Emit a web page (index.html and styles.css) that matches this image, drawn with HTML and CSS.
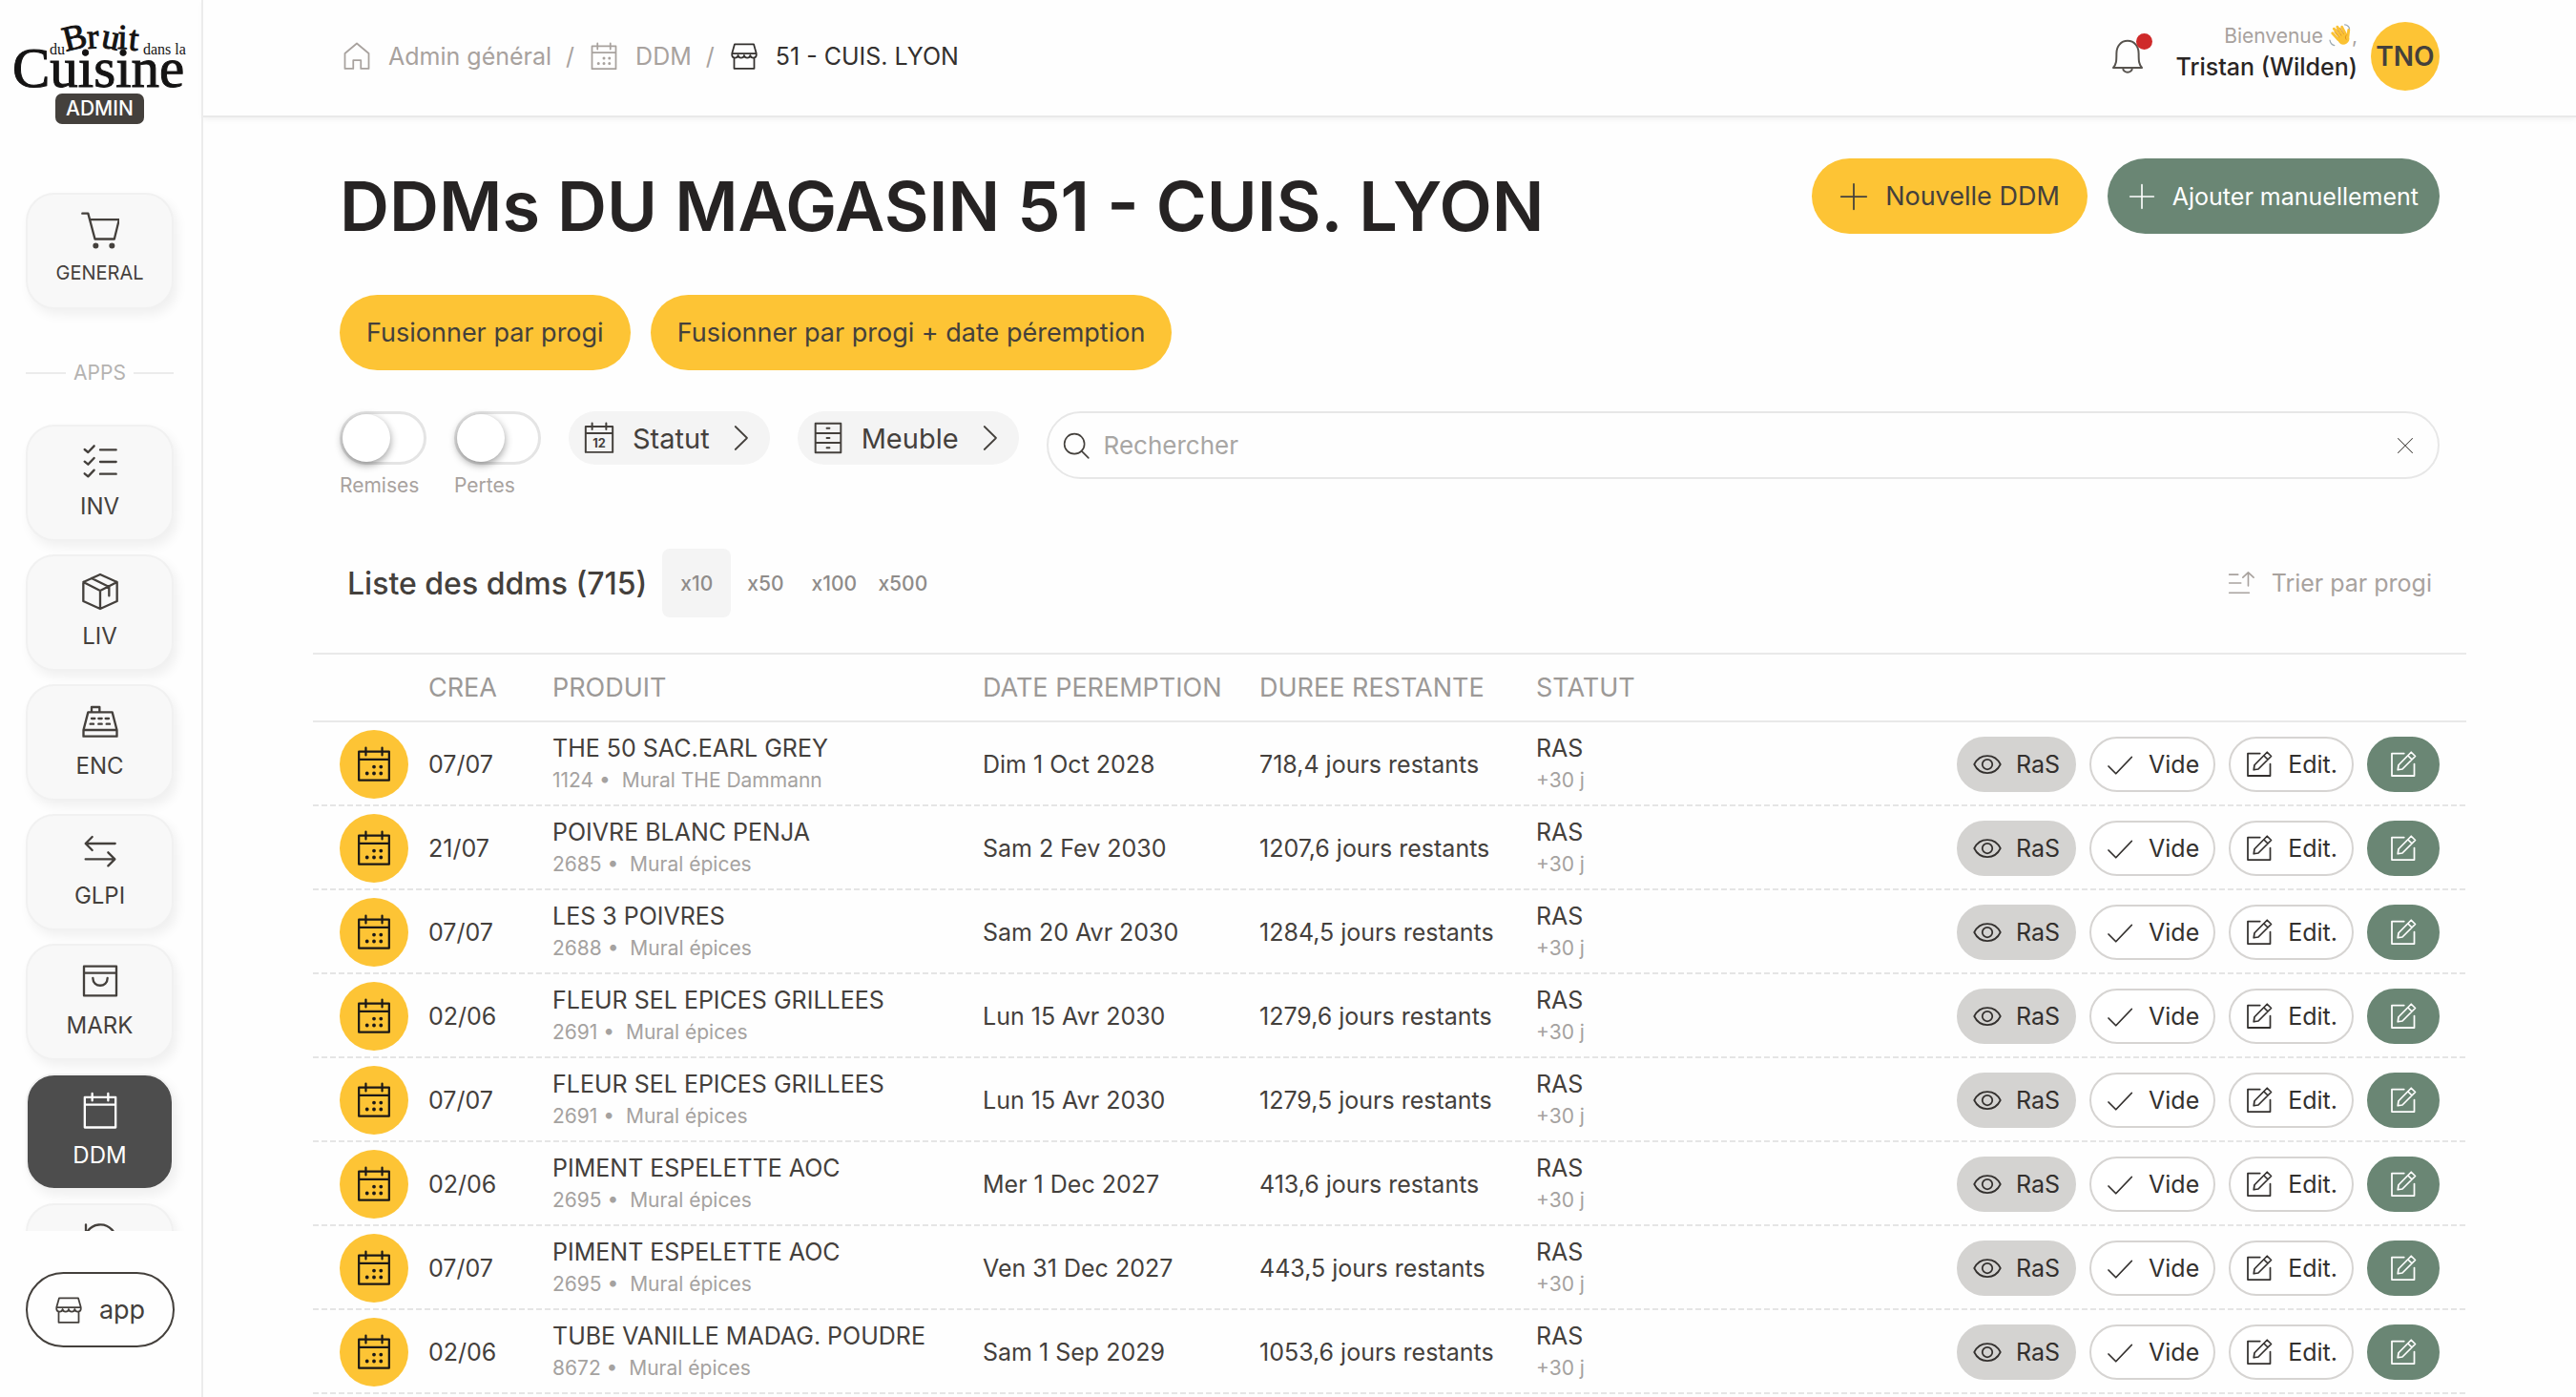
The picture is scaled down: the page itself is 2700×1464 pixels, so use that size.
FILE: index.html
```html
<!DOCTYPE html>
<html lang="fr">
  <head>
    <meta charset="UTF-8" />
    <meta name="viewport" content="width=device-width, initial-scale=1.0" />
    <title>DDMs du magasin 51 - CUIS. LYON</title>
    <link rel="stylesheet" href="styles.css">
  </head>
  <body>
    <!-- Icons -->
    <svg class="sprite" aria-hidden="true">
      <symbol id="i-home" viewBox="0 0 24 24"><path d="M2 9.6 12 1.2l10 8.4v12.7h-6.6v-7H9v7H2z" /></symbol>
      <symbol id="i-calendar" viewBox="0 0 24 24">
        <path d="M2 3.5h20v19H2zM2 8.8h20M6.6 1v5M17.4 1v5" />
        <path class="dots" d="M12 13.6h.01M16.6 13.6h.01M7.4 18h.01M12 18h.01M16.6 18h.01" />
      </symbol>
      <symbol id="i-calendar-blank" viewBox="0 0 24 24"><path d="M2.3 3.5h19.4v19H2.3zM2.3 8.2h19.4M7 1.2v4.4M17 1.2v4.4" /></symbol>
      <symbol id="i-store" viewBox="0 0 24 24"><path d="M4 1.8h16l2.2 7.8H1.8zM1.8 9.6v1.6a2.6 2.6 0 0 0 5.1 0 2.6 2.6 0 0 0 5.1 0 2.6 2.6 0 0 0 5.1 0 2.6 2.6 0 0 0 5.1 0V9.6M3.6 13.8v8.4h16.8v-8.4" /></symbol>
      <symbol id="i-cart" viewBox="0 0 24 24"><path d="M.8 1.6h3.6l4.3 16.1h12.2l3-12.2H5.5" /><path class="wheel" d="M9.2 21.9h.01M19.4 21.9h.01" /></symbol>
      <symbol id="i-checklist" viewBox="0 0 24 24"><path d="M12 4.4h10M12 12h10M12 19.6h10M2.2 4.2 4.4 6l3.8-4M2.2 11.8l2.2 1.8 3.8-4M2.2 19.4l2.2 1.8 3.8-4" /></symbol>
      <symbol id="i-box" viewBox="0 0 24 24"><path d="M12 1.2 22.6 6v12L12 22.8 1.4 18V6zM1.4 6 12 11.4 22.6 6M12 11.4v11.4M6.6 3.6 17.6 9v5.6" /></symbol>
      <symbol id="i-register" viewBox="0 0 24 24"><path d="M4.4 6.2h15.2l2.9 11.2v4H1.5v-4zM1.5 17.4h21M6.6 6.2V3h5v3.2M6.6 10.2h2M11 10.2h2M15.4 10.2h2M5.8 13.6h2M11 13.6h2M16 13.6h2" /></symbol>
      <symbol id="i-swap" viewBox="0 0 24 24"><path d="M21.4 7.2H3M7 3 2.8 7.2 7 11.4M2.8 17H21M17 12.8l4.2 4.2-4.2 4.2" /></symbol>
      <symbol id="i-bag" viewBox="0 0 24 24"><path d="M1.8 2.8h20.4v18.4H1.8zM1.8 7h20.4M7.4 10.2c0 6.2 9.2 6.2 9.2 0" /></symbol>
      <symbol id="i-history" viewBox="0 0 24 24"><path d="M3 2v5h5M3.6 7a9.8 9.8 0 1 1-1.2 6M12 8v5l3 2" /></symbol>
      <symbol id="i-bell" viewBox="0 0 24 26"><path d="M1.4 21.4c2.2-2.4 2.4-4.6 2.4-10.6C3.8 5.6 7 1.6 12 1.6s8.2 4 8.2 9.2c0 6 .2 8.2 2.4 10.6zM8.6 21.6c0 4.2 6.8 4.2 6.8 0" /></symbol>
      <symbol id="i-plus" viewBox="0 0 24 24"><path d="M12 1.4v21.2M1.4 12h21.2" /></symbol>
      <symbol id="i-drawers" viewBox="0 0 24 24"><path d="M2.6 1.2h18.8v21.6H2.6zM2.6 8.4h18.8M2.6 15.6h18.8M11 4.8h2M11 12h2M11 19.2h2" /></symbol>
      <symbol id="i-chevron" viewBox="0 0 24 24"><path d="m7 2.4 9.8 9.6L7 21.6" /></symbol>
      <symbol id="i-search" viewBox="0 0 24 24"><circle cx="10.4" cy="10.4" r="9" /><path d="m16.8 16.8 6.2 6.2" /></symbol>
      <symbol id="i-close" viewBox="0 0 24 24"><path d="m2 2 20 20M22 2 2 22" /></symbol>
      <symbol id="i-sort" viewBox="0 0 24 24"><path d="M1.4 4.4h7.8M1.4 12h10.4M1.4 20.8h17.8M18.4 14.6V2.4M13.6 7l4.8-4.6L23.2 7" /></symbol>
      <symbol id="i-eye" viewBox="0 0 24 24"><path d="M1 12c4.6-9.6 17.4-9.6 22 0-4.6 9.6-17.4 9.6-22 0z" /><circle cx="12" cy="12" r="4.2" /></symbol>
      <symbol id="i-check" viewBox="0 0 24 24"><path d="M2.4 13.6 8.6 19.8 21.8 6" /></symbol>
      <symbol id="i-edit" viewBox="0 0 24 24"><path d="M12.6 2.8H2.4v18.800h18.800V11.600" /><path d="M18.600 1.800l3.400 3.400-10.800 10.800-3.800.6.600-4zM15.800 4.600l3.400 3.400" /></symbol>
    </svg>

    <div class="layout">
      <aside class="sidebar">
        <svg class="logo" viewBox="0 0 184 72" role="img" aria-label="Du bruit dans la cuisine">
          <text y="68" class="logo-big">Cuisine</text>
          <text x="39" y="34" class="logo-small">du</text>
          <text x="137" y="34" class="logo-small">dans la</text>
          <text x="56 79 92 110 121" y="31 28 26 28 29" rotate="-14 -4 12 2 6" class="logo-bruit">Bruit</text>
        </svg>
        <span class="badge">ADMIN</span>

        <nav class="nav">
          <a href="#" class="nav-card nav-first"><svg class="icon-nav"><use href="#i-cart" /></svg>GENERAL</a>
          <div class="divider">APPS</div>
          <a href="#" class="nav-card"><svg class="icon-nav"><use href="#i-checklist" /></svg>INV</a>
          <a href="#" class="nav-card"><svg class="icon-nav"><use href="#i-box" /></svg>LIV</a>
          <a href="#" class="nav-card"><svg class="icon-nav"><use href="#i-register" /></svg>ENC</a>
          <a href="#" class="nav-card"><svg class="icon-nav"><use href="#i-swap" /></svg>GLPI</a>
          <a href="#" class="nav-card"><svg class="icon-nav"><use href="#i-bag" /></svg>MARK</a>
          <a href="#" class="nav-card active"><svg class="icon-nav"><use href="#i-calendar-blank" /></svg>DDM</a>
          <a href="#" class="nav-card" aria-label="Historique"><svg class="icon-nav"><use href="#i-history" /></svg></a>
        </nav>

        <button type="button" class="app-btn"><svg class="icon"><use href="#i-store" /></svg>app</button>
      </aside>

      <div class="page">
        <header class="topbar">
          <nav class="breadcrumb">
            <a href="#"><svg class="icon"><use href="#i-home" /></svg>Admin général</a>
            <span class="sep">/</span>
            <a href="#"><svg class="icon"><use href="#i-calendar" /></svg>DDM</a>
            <span class="sep">/</span>
            <a href="#" class="current"><svg class="icon"><use href="#i-store" /></svg>51 - CUIS. LYON</a>
          </nav>

          <div class="user">
            <button type="button" class="bell" aria-label="Notifications">
              <svg class="icon-bell"><use href="#i-bell" /></svg>
              <span class="bell-dot"></span>
            </button>
            <div class="user-text">
              <div class="welcome">Bienvenue
                <svg class="wave" viewBox="0 0 24 24" role="img" aria-label="coucou">
                  <g transform="rotate(-36 12 12)" fill="none" stroke="#fbc233" stroke-width="2.9" stroke-linecap="round" stroke-linejoin="round">
                    <path d="M7.6 14 6.6 5.4M11 12 10.6 2.6M14.2 12 14.6 3M17.2 14 18.4 6" />
                    <path d="M17.4 18 22.4 12.6" />
                    <path d="M8 13.6h9v4c0 5-9 5-9 0z" fill="#fbc233" />
                    <path d="M9.2 5.6l.4 7M12.7 4.6v8M16.3 5.6l-.6 7M17.6 15.6c-2 0-3.2 1.4-3.2 3.4" stroke="#d98b1a" stroke-width=".8" />
                  </g>
                  <path d="M16.6.8c2.6.2 4.4 1.8 5 4.4M1 17.2c.4 2.8 2 4.8 4.8 5.4" fill="none" stroke="#9aa7b0" stroke-width="1.2" stroke-linecap="round" />
                </svg>,</div>
              <div class="user-name">Tristan (Wilden)</div>
            </div>
            <div class="avatar">TNO</div>
          </div>
        </header>

        <main class="content">
          <div class="head">
            <h1>DDMs DU MAGASIN 51 - CUIS. LYON</h1>
            <div class="head-actions">
              <button type="button" class="btn"><svg class="icon"><use href="#i-plus" /></svg>Nouvelle DDM</button>
              <button type="button" class="btn btn-green"><svg class="icon icon-sm"><use href="#i-plus" /></svg>Ajouter manuellement</button>
            </div>
          </div>

          <div class="merge">
            <button type="button" class="btn">Fusionner par progi</button>
            <button type="button" class="btn">Fusionner par progi + date péremption</button>
          </div>

          <form class="filters">
            <div class="toggle">
              <input type="checkbox" id="remises" />
              <label for="remises">Remises</label>
            </div>
            <div class="toggle">
              <input type="checkbox" id="pertes" />
              <label for="pertes">Pertes</label>
            </div>
            <button type="button" class="pill">
              <svg class="icon-pill" viewBox="0 0 24 24">
                <path d="M2 3.5h20v19H2zM2 8.4h20M6.8 1v4.6M17.2 1v4.6" />
                <text x="12" y="19.4" class="icon-day">12</text>
              </svg>
              Statut
              <svg class="icon"><use href="#i-chevron" /></svg>
            </button>
            <button type="button" class="pill">
              <svg class="icon-pill"><use href="#i-drawers" /></svg>
              Meuble
              <svg class="icon"><use href="#i-chevron" /></svg>
            </button>
            <div class="search">
              <svg class="icon-search"><use href="#i-search" /></svg>
              <input type="text" placeholder="Rechercher" aria-label="Rechercher" />
              <button type="button" aria-label="Effacer"><svg class="icon-close"><use href="#i-close" /></svg></button>
            </div>
          </form>

          <div class="list-head">
            <h2>Liste des ddms (715)</h2>
            <div class="sizes">
              <button type="button" class="selected">x10</button>
              <button type="button">x50</button>
              <button type="button">x100</button>
              <button type="button">x500</button>
            </div>
            <button type="button" class="sort"><svg class="icon-search"><use href="#i-sort" /></svg>Trier par progi</button>
          </div>

          <table class="ddms">
            <thead>
              <tr>
                <th class="col-icon"></th>
                <th class="col-crea">CREA</th>
                <th class="col-product">PRODUIT</th>
                <th class="col-date">DATE PEREMPTION</th>
                <th class="col-date">DUREE RESTANTE</th>
                <th>STATUT</th>
                <th class="col-actions"></th>
              </tr>
            </thead>
            <tbody id="rows"></tbody>
          </table>
        </main>
      </div>
    </div>

    <script src="script.js"></script>
  </body>
</html>
```

FILE: styles.css
```css
* {
  box-sizing: border-box;
}

body {
  margin: 0;
  font-family: Inter, "Liberation Sans", sans-serif;
  font-size: 25px;
  color: #44403c;
  background-color: #fefefe;
}

a {
  color: inherit;
  text-decoration: none;
}

button {
  font: inherit;
  color: inherit;
  background: none;
  border: none;
  padding: 0;
  cursor: pointer;
}

/* Icons */
.sprite {
  position: absolute;
  width: 0;
  height: 0;
}

svg {
  flex-shrink: 0;
}

.icon,
.icon-nav,
.icon-bell,
.icon-pill,
.icon-search,
.icon-close {
  width: 30px;
  height: 30px;
  fill: none;
  stroke: currentColor;
  stroke-width: 1.4;
  stroke-linecap: round;
  stroke-linejoin: round;
}

.icon-sm,
.icon-search {
  width: 28px;
  height: 28px;
}

.icon-nav {
  width: 40px;
  height: 40px;
}

.icon-bell {
  width: 34px;
  height: 38px;
}

.icon-pill {
  width: 34px;
  height: 34px;
}

.icon-close {
  width: 18px;
  height: 18px;
}

.dots {
  stroke-width: 2.4;
}

.wheel {
  stroke-width: 3.6;
}

.icon-day {
  font-size: 9px;
  font-weight: 700;
  text-anchor: middle;
  fill: currentColor;
  stroke: none;
}

.layout {
  display: flex;
  align-items: flex-start;
}

/* Sidebar */
.sidebar {
  position: sticky;
  top: 0;
  display: flex;
  flex-direction: column;
  align-items: center;
  flex-shrink: 0;
  width: 213px;
  height: 100vh;
  padding: 23px 2px 52px 0;
  border-right: 2px solid #ececec;
}

.logo {
  width: 184px;
  height: 72px;
  overflow: visible;
  fill: #141313;
  stroke: #141313;
  font-family: "Liberation Serif", serif;
}

.logo-big {
  font-size: 59px;
  stroke-width: 1;
}

.logo-small {
  font-size: 16px;
  stroke: none;
}

.logo-bruit {
  font-size: 37px;
  stroke-width: 1;
}

.badge {
  margin-top: 3px;
  padding: 0 11px;
  border-radius: 7px;
  background-color: #44403c;
  color: #fff;
  font-size: 21px;
  font-weight: 500;
  line-height: 32px;
}

.nav {
  flex: 1;
  min-height: 0;
  width: 100%;
  margin: 52px 0 43px;
  padding: 20px 27px 0;
  overflow: hidden;
}

.nav-card {
  display: flex;
  flex-direction: column;
  align-items: center;
  gap: 13px;
  height: 122px;
  margin-bottom: 14px;
  padding-top: 17px;
  border: 2px solid #f1f1f1;
  border-radius: 30px;
  background-color: #f8f8f8;
  box-shadow: 4px 6px 12px rgba(0, 0, 0, 0.06);
  font-size: 24px;
  line-height: 28px;
}

.nav-first {
  gap: 11px;
  margin-bottom: 0;
  font-size: 20px;
}

.nav-card.active {
  background-color: #4d4d4d;
  color: #fff;
}

.divider {
  display: flex;
  align-items: center;
  gap: 8px;
  height: 121px;
  padding-top: 12px;
  color: #b5b3b1;
  font-size: 21px;
  line-height: 28px;
}

.divider::before,
.divider::after {
  content: "";
  flex: 1;
  height: 2px;
  background-color: #ececec;
}

.app-btn {
  display: flex;
  align-items: center;
  justify-content: center;
  gap: 17px;
  width: 156px;
  height: 79px;
  border: 2px solid #44403c;
  border-radius: 40px;
  font-size: 27px;
}

/* Top bar */
.page {
  flex: 1;
  min-width: 0;
}

.topbar {
  display: flex;
  align-items: center;
  justify-content: space-between;
  height: 123px;
  padding: 0 143px 4px;
  border-bottom: 2px solid #e9e9e9;
  box-shadow: 0 2px 6px rgba(0, 0, 0, 0.06);
}

.breadcrumb {
  display: flex;
  align-items: center;
  padding-left: 3px;
  color: #a8a29e;
}

.breadcrumb a {
  display: flex;
  align-items: center;
  gap: 18px;
}

.breadcrumb .current {
  color: #33302e;
}

.sep {
  margin: 0 16px 0 15px;
}

.user {
  display: flex;
  align-items: center;
}

.bell {
  position: relative;
  display: flex;
  margin-right: 34px;
  color: #57534e;
}

.bell-dot {
  position: absolute;
  top: -5px;
  right: -9px;
  width: 17px;
  height: 17px;
  border-radius: 50%;
  background-color: #cf2a2a;
}

.user-text {
  margin-right: 14px;
  padding-bottom: 9px;
  text-align: right;
  line-height: 32px;
}

.welcome {
  color: #a8a29e;
  font-size: 21px;
}

.wave {
  width: 24px;
  height: 24px;
  vertical-align: -4px;
}

.user-name {
  color: #292524;
  font-weight: 500;
}

.avatar {
  display: flex;
  align-items: center;
  justify-content: center;
  width: 72px;
  height: 72px;
  border-radius: 50%;
  background-color: #fdc435;
  font-size: 28px;
  font-weight: 600;
}

/* Content */
.content {
  padding: 43px 143px 0;
}

.head {
  display: flex;
  align-items: flex-start;
  justify-content: space-between;
}

h1 {
  margin: 0;
  color: #262323;
  font-size: 72px;
  font-weight: 600;
  line-height: 100px;
}

.head-actions,
.merge {
  display: flex;
  gap: 21px;
}

.btn {
  display: flex;
  align-items: center;
  gap: 18px;
  height: 79px;
  padding: 0 29px;
  border-radius: 40px;
  background-color: #fdc435;
  font-size: 27px;
}

.btn-green {
  padding: 0 22px;
  background-color: #6a8674;
  color: #fff;
  font-size: 25px;
}

.merge {
  margin-top: 43px;
}

.merge .btn {
  padding: 0 28px;
}

.filters {
  display: flex;
  align-items: flex-start;
  gap: 29px;
  margin-top: 43px;
}

.toggle {
  width: 91px;
  height: 92px;
}

.toggle input {
  display: block;
  appearance: none;
  width: 91px;
  height: 56px;
  margin: 0 0 8px;
  border: 3px solid #e4e4e4;
  border-radius: 28px;
  background-color: #fff;
}

.toggle input::before {
  content: "";
  display: block;
  width: 50px;
  height: 50px;
  border-radius: 50%;
  background-color: #fff;
  box-shadow: 0 3px 8px rgba(0, 0, 0, 0.4);
}

.toggle input:checked::before {
  margin-left: 35px;
}

.toggle label {
  display: block;
  color: #a8a29e;
  font-size: 21px;
  line-height: 28px;
}

.pill {
  display: flex;
  align-items: center;
  gap: 18px;
  height: 56px;
  padding: 0 15px;
  border-radius: 28px;
  background-color: #f4f4f4;
  font-size: 29px;
}

.search {
  display: flex;
  flex: 1;
  align-items: center;
  gap: 15px;
  height: 71px;
  padding: 0 25px 0 15px;
  border: 2px solid #e7e7e7;
  border-radius: 36px;
}

.search input {
  flex: 1;
  min-width: 0;
  padding: 0;
  border: none;
  outline: none;
  background: none;
  font: inherit;
  font-size: 26px;
}

.search input::placeholder {
  color: #a8a6a4;
}

.search button {
  display: flex;
}

/* List header */
.list-head {
  display: flex;
  align-items: center;
  margin-top: 52px;
  padding: 0 8px;
}

h2 {
  margin: 0;
  font-size: 32px;
  font-weight: 500;
}

.sizes {
  display: flex;
  margin-left: 16px;
}

.sizes button {
  width: 72px;
  height: 72px;
  border-radius: 8px;
  color: #8f8c8a;
  font-size: 21px;
  font-weight: 500;
}

.sizes .selected {
  background-color: #f4f4f4;
}

.sort {
  display: flex;
  align-items: center;
  gap: 18px;
  margin-left: auto;
  color: #a8a29e;
}

/* Table */
.ddms {
  width: calc(100% + 56px);
  margin: 37px -28px 0;
  border-spacing: 0;
  table-layout: fixed;
}

.ddms th,
.ddms td {
  padding: 0;
  text-align: left;
}

.ddms th {
  height: 73px;
  border-top: 2px solid #e9e9e9;
  border-bottom: 2px solid #e9e9e9;
  color: #9c9997;
  font-size: 27px;
  font-weight: 400;
}

.ddms td {
  height: 88px;
}

.ddms tbody tr {
  background: repeating-linear-gradient(90deg, #e5e5e5 0 6px, transparent 6px 9px) bottom / 100% 2px no-repeat;
}

.col-icon {
  width: 121px;
}

.col-crea {
  width: 130px;
}

.col-product {
  width: 451px;
}

.col-date {
  width: 290px;
}

.col-actions {
  width: 560px;
}

.ddms td:first-child {
  padding-left: 28px;
}

.round {
  display: flex;
  align-items: center;
  justify-content: center;
  width: 72px;
  height: 72px;
  border-radius: 50%;
  background-color: #fdc435;
  color: #1c1917;
}

.round svg {
  width: 38px;
  height: 38px;
}

.main-line,
.sub-line {
  line-height: 34px;
}

.sub-line {
  color: #a5a2a0;
  font-size: 21px;
}

.actions {
  display: flex;
  justify-content: flex-end;
  gap: 14px;
  padding-right: 28px;
}

.action {
  display: flex;
  align-items: center;
  gap: 15px;
  height: 58px;
  padding: 0 15px;
  border: 2px solid #d6d4d2;
  border-radius: 29px;
  background-color: #fff;
  color: #33302e;
}

.action-ras {
  border-color: #d4d3d1;
  background-color: #d4d3d1;
}

.action-green {
  justify-content: center;
  width: 76px;
  border-color: #6a8674;
  background-color: #6a8674;
  color: #fff;
}
```

FILE: script.js
```js
const ddms = [
  ["07/07", "THE 50 SAC.EARL GREY", "1124", "Mural THE Dammann", "Dim 1 Oct 2028", "718,4"],
  ["21/07", "POIVRE BLANC PENJA", "2685", "Mural épices", "Sam 2 Fev 2030", "1207,6"],
  ["07/07", "LES 3 POIVRES", "2688", "Mural épices", "Sam 20 Avr 2030", "1284,5"],
  ["02/06", "FLEUR SEL EPICES GRILLEES", "2691", "Mural épices", "Lun 15 Avr 2030", "1279,6"],
  ["07/07", "FLEUR SEL EPICES GRILLEES", "2691", "Mural épices", "Lun 15 Avr 2030", "1279,5"],
  ["02/06", "PIMENT ESPELETTE AOC", "2695", "Mural épices", "Mer 1 Dec 2027", "413,6"],
  ["07/07", "PIMENT ESPELETTE AOC", "2695", "Mural épices", "Ven 31 Dec 2027", "443,5"],
  ["02/06", "TUBE VANILLE MADAG. POUDRE", "8672", "Mural épices", "Sam 1 Sep 2029", "1053,6"],
];

function icon(name) {
  return `<svg class="icon"><use href="#i-${name}" /></svg>`;
}

document.getElementById("rows").innerHTML = ddms
  .map(
    ([crea, product, progi, place, date, days]) => `
      <tr>
        <td><span class="round">${icon("calendar")}</span></td>
        <td>${crea}</td>
        <td>
          <div class="main-line">${product}</div>
          <div class="sub-line">${progi} •&nbsp; ${place}</div>
        </td>
        <td>${date}</td>
        <td>${days} jours restants</td>
        <td>
          <div class="main-line">RAS</div>
          <div class="sub-line">+30 j</div>
        </td>
        <td>
          <div class="actions">
            <button type="button" class="action action-ras">${icon("eye")}RaS</button>
            <button type="button" class="action">${icon("check")}Vide</button>
            <button type="button" class="action">${icon("edit")}Edit.</button>
            <button type="button" class="action action-green" aria-label="Modifier ${product}">${icon("edit")}</button>
          </div>
        </td>
      </tr>`
  )
  .join("");
```
